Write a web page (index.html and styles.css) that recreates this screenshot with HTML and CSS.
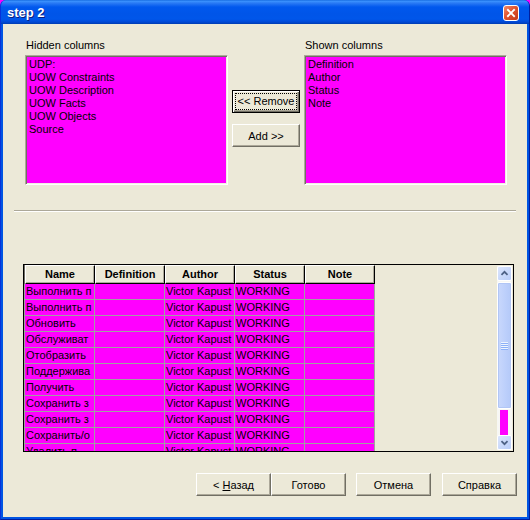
FILE: index.html
```html
<!DOCTYPE html>
<html>
<head>
<meta charset="utf-8">
<link rel="stylesheet" href="styles.css">
</head>
<body>
<div class="window">
  <div class="titlebar">
    <span class="title">step 2</span>
    <span class="close"><svg width="16" height="16" viewBox="0 0 16 16"><path d="M4.5 4.5 L11.5 11.5 M11.5 4.5 L4.5 11.5" stroke="#fff" stroke-width="2.2" stroke-linecap="square"/></svg></span>
  </div>
  <div class="client">
    <div class="top">
      <div class="col">
        <div class="label">Hidden columns</div>
        <div class="listbox">
          <div class="item">UDP:</div>
          <div class="item">UOW Constraints</div>
          <div class="item">UOW Description</div>
          <div class="item">UOW Facts</div>
          <div class="item">UOW Objects</div>
          <div class="item">Source</div>
        </div>
      </div>
      <div class="mid">
        <div class="btn small default"><span class="focus">&lt;&lt; Remove</span></div>
        <div class="btn small">Add &gt;&gt;</div>
      </div>
      <div class="col">
        <div class="label">Shown columns</div>
        <div class="listbox">
          <div class="item">Definition</div>
          <div class="item">Author</div>
          <div class="item">Status</div>
          <div class="item">Note</div>
        </div>
      </div>
    </div>
    <div class="sep"></div>
    <div class="tablebox">
      <div class="grid">
        <div class="hrow">
          <div class="hcell">Name</div>
          <div class="hcell">Definition</div>
          <div class="hcell">Author</div>
          <div class="hcell">Status</div>
          <div class="hcell">Note</div>
        </div>
        <div class="rows">
          <div class="row"><div class="cell">Выполнить п</div><div class="cell"></div><div class="cell">Victor Kapust</div><div class="cell">WORKING</div><div class="cell"></div></div>
          <div class="row"><div class="cell">Выполнить п</div><div class="cell"></div><div class="cell">Victor Kapust</div><div class="cell">WORKING</div><div class="cell"></div></div>
          <div class="row"><div class="cell">Обновить</div><div class="cell"></div><div class="cell">Victor Kapust</div><div class="cell">WORKING</div><div class="cell"></div></div>
          <div class="row"><div class="cell">Обслуживат</div><div class="cell"></div><div class="cell">Victor Kapust</div><div class="cell">WORKING</div><div class="cell"></div></div>
          <div class="row"><div class="cell">Отобразить</div><div class="cell"></div><div class="cell">Victor Kapust</div><div class="cell">WORKING</div><div class="cell"></div></div>
          <div class="row"><div class="cell">Поддержива</div><div class="cell"></div><div class="cell">Victor Kapust</div><div class="cell">WORKING</div><div class="cell"></div></div>
          <div class="row"><div class="cell">Получить</div><div class="cell"></div><div class="cell">Victor Kapust</div><div class="cell">WORKING</div><div class="cell"></div></div>
          <div class="row"><div class="cell">Сохранить з</div><div class="cell"></div><div class="cell">Victor Kapust</div><div class="cell">WORKING</div><div class="cell"></div></div>
          <div class="row"><div class="cell">Сохранить з</div><div class="cell"></div><div class="cell">Victor Kapust</div><div class="cell">WORKING</div><div class="cell"></div></div>
          <div class="row"><div class="cell">Сохранить/о</div><div class="cell"></div><div class="cell">Victor Kapust</div><div class="cell">WORKING</div><div class="cell"></div></div>
          <div class="row"><div class="cell">Удалить п</div><div class="cell"></div><div class="cell">Victor Kapust</div><div class="cell">WORKING</div><div class="cell"></div></div>
        </div>
      </div>
      <div class="spacer"></div>
      <div class="scrollbar">
        <div class="sbtn"><svg width="15" height="15" viewBox="0 0 15 15"><polyline points="4,9 7.5,5.5 11,9" fill="none" stroke="#4d6185" stroke-width="2"/></svg></div>
        <div class="thumb"><div class="grip"></div></div>
        <div class="track"><div class="trackfill"></div></div>
        <div class="sbtn"><svg width="15" height="15" viewBox="0 0 15 15"><polyline points="4,6 7.5,9.5 11,6" fill="none" stroke="#4d6185" stroke-width="2"/></svg></div>
      </div>
    </div>
    <div class="buttons">
      <div class="btn wide"><span>&lt; <u>Н</u>азад</span></div>
      <div class="btn wide">Готово</div>
      <div class="btn wide gap10">Отмена</div>
      <div class="btn wide gap11">Справка</div>
    </div>
  </div>
</div>
</body>
</html>
```
FILE: styles.css
```css
html, body {
  margin: 0;
  padding: 0;
  background: #ff00ff;
}
body {
  font-family: "Liberation Sans", Arial, sans-serif;
  font-size: 11px;
  color: #000;
}
.window {
  width: 530px;
  height: 520px;
  box-sizing: border-box;
  display: flex;
  flex-direction: column;
  background: #0054e3;
  border-radius: 6px 6px 0 0;
  overflow: hidden;
  border-left: 1px solid #0831d9;
  border-right: 1px solid #001ea0;
  border-bottom: 1px solid #001ea0;
}
.titlebar {
  height: 24px;
  flex: none;
  display: flex;
  align-items: center;
  justify-content: space-between;
  padding: 0 10px 0 6px;
  background: linear-gradient(to bottom, #0a5fd8 0, #3d95ff 1px, #2a7bf5 3px, #0058ee 7px, #0055e8 14px, #0056ea 19px, #0049d6 22px, #003cb0 24px);
}
.title {
  color: #fff;
  font-weight: bold;
  font-size: 13px;
  text-shadow: 1px 1px 0 #0a1f7d;
  padding-top: 1px;
}
.close {
  width: 16px;
  height: 16px;
  box-sizing: border-box;
  border: 1px solid #fff;
  border-radius: 3px;
  background: linear-gradient(135deg, #f08a6a 0%, #e0542f 45%, #c2391a 100%);
  display: flex;
  align-items: center;
  justify-content: center;
  margin-top: 2px;
}
.close svg {
  width: 14px;
  height: 14px;
}
.client {
  flex: 1;
  margin: 0 2px 2px 2px;
  background: #ece9d8;
  display: flex;
  flex-direction: column;
}
.top {
  display: flex;
  padding: 13px 0 0 22px;
}
.col {
  width: 203px;
}
.label {
  line-height: 13px;
  height: 13px;
  padding-top: 2px;
  margin-bottom: 3px;
  padding-left: 1px;
}
.listbox {
  height: 130px;
  box-sizing: border-box;
  background: #ff00ff;
  border: 1px solid;
  border-color: #aca899 #fff #fff #aca899;
  box-shadow: inset 1px 1px 0 #716f64, inset -1px -1px 0 #f1efe2;
  padding: 2px 0 0 3px;
}
.item {
  line-height: 13px;
  white-space: nowrap;
}
.mid {
  width: 68px;
  margin: 0 4px;
  padding-top: 53px;
  display: flex;
  flex-direction: column;
  gap: 11px;
}
.btn {
  box-sizing: border-box;
  background: #ece9d8;
  border: 1px solid;
  border-color: #fff #716f64 #716f64 #fff;
  box-shadow: inset -1px -1px 0 #aca899;
  display: flex;
  align-items: center;
  justify-content: center;
  white-space: nowrap;
}
.btn.small {
  width: 68px;
  height: 23px;
}
.btn.default {
  border: 1px solid #000;
  box-shadow: inset 1px 1px 0 #fff, inset -1px -1px 0 #716f64, inset -2px -2px 0 #aca899;
}
.focus {
  border: 1px dotted #000;
  padding: 1px 2px;
  line-height: 13px;
}
.sep {
  margin: 25px 11px 0 11px;
  border-top: 1px solid #aca899;
  border-bottom: 1px solid #fff;
}
.tablebox {
  margin: 52px 0 0 20px;
  width: 491px;
  height: 188px;
  box-sizing: border-box;
  border: 1px solid #000;
  display: flex;
  overflow: hidden;
}
.grid {
  width: 351px;
  flex: none;
  display: flex;
  flex-direction: column;
  overflow: hidden;
}
.hrow {
  display: flex;
  height: 19px;
  flex: none;
  border-left: 1px solid #716f64;
}
.hcell {
  width: 70px;
  box-sizing: border-box;
  border: 1px solid;
  border-color: #fff #000 #000 #fff;
  box-shadow: inset -1px -1px 0 #aca899;
  font-weight: bold;
  display: flex;
  align-items: center;
  justify-content: center;
  padding-bottom: 1px;
}
.rows {
  flex: 1;
  overflow: hidden;
  border-left: 1px solid #a0a0a0;
  background: #ff00ff;
}
.row {
  display: flex;
  height: 16px;
  box-sizing: border-box;
  border-bottom: 1px solid #a0a0a0;
}
.cell {
  width: 70px;
  box-sizing: border-box;
  border-right: 1px solid #a0a0a0;
  line-height: 15px;
  padding-left: 1px;
  white-space: nowrap;
  overflow: hidden;
}
.spacer {
  flex: 1;
}
.scrollbar {
  width: 15px;
  flex: none;
  margin: 1px 1px 1px 0;
  display: flex;
  flex-direction: column;
  background: #f7f7f4;
}
.sbtn {
  height: 15px;
  flex: none;
  box-sizing: border-box;
  border: 1px solid #fff;
  border-radius: 2px;
  background: linear-gradient(135deg, #dce6fd, #b9cdf9);
  display: flex;
  align-items: center;
  justify-content: center;
}
.sbtn svg {
  display: block;
  width: 13px;
  height: 13px;
}
.thumb {
  height: 127px;
  flex: none;
  margin-top: 1px;
  box-sizing: border-box;
  border: 1px solid #fff;
  border-radius: 2px;
  background: linear-gradient(to right, #c9d8fc, #bccffb 60%, #b4c9f8);
  box-shadow: inset 0 0 0 1px #b1c6f6;
  display: flex;
  align-items: center;
  justify-content: center;
}
.grip {
  width: 7px;
  height: 8px;
  background: repeating-linear-gradient(to bottom, #eef4fe 0 1px, #8cb0f8 1px 2px);
}
.track {
  flex: 1;
  display: flex;
  padding: 1px 4px 0 3px;
}
.trackfill {
  flex: 1;
  background: #ff00ff;
}
.buttons {
  display: flex;
  justify-content: flex-end;
  margin-top: 21px;
  padding-right: 10px;
}
.btn.wide {
  width: 75px;
  height: 23px;
}
.gap10 {
  margin-left: 10px;
}
.gap11 {
  margin-left: 11px;
}
```
